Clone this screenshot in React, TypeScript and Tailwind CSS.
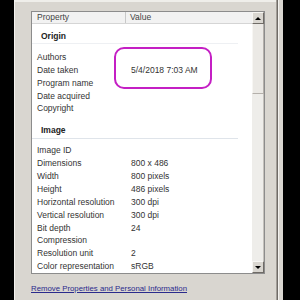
const font = { fontFamily: '"Liberation Sans", Arial, sans-serif' }

const origin: [string, string][] = [
  ['Authors', ''],
  ['Date taken', '5/4/2018 7:03 AM'],
  ['Program name', ''],
  ['Date acquired', ''],
  ['Copyright', ''],
]

const image: [string, string][] = [
  ['Image ID', ''],
  ['Dimensions', '800 x 486'],
  ['Width', '800 pixels'],
  ['Height', '486 pixels'],
  ['Horizontal resolution', '300 dpi'],
  ['Vertical resolution', '300 dpi'],
  ['Bit depth', '24'],
  ['Compression', ''],
  ['Resolution unit', '2'],
  ['Color representation', 'sRGB'],
]

function Row({ label, value }: { label: string; value: string }) {
  return (
    <div className="flex h-[13.3px] items-center text-[8.5px] text-[#333]">
      <div className="w-[99px] shrink-0 pl-[5px] whitespace-nowrap">{label}</div>
      <div className="whitespace-nowrap">{value}</div>
    </div>
  )
}

function ScrollButton({ up }: { up?: boolean }) {
  return (
    <div className="flex h-[12px] items-center justify-center border border-t-[#f7f6f3] border-l-[#f7f6f3] border-r-[#6f6b66] border-b-[#6f6b66] bg-[#d9d6d0]">
      <div
        className={
          up
            ? 'h-0 w-0 border-x-[3px] border-b-[3px] border-x-transparent border-b-black'
            : 'h-0 w-0 border-x-[3px] border-t-[3px] border-x-transparent border-t-black'
        }
      />
    </div>
  )
}

export default function App() {
  return (
    <div className="relative flex h-[300px] w-[300px] overflow-hidden bg-black" style={font}>
      <div className="w-[14px] shrink-0 bg-black" />

      {/* dialog page */}
      <div className="flex w-[262px] shrink-0 flex-col border-l border-[#f3f2ef] bg-[#d9d6d0]">
        <div className="h-[11px] shrink-0 border-t-2 border-[#efeeea]" />

        <div className="ml-[16px] flex h-[263px] w-[234px] shrink-0 overflow-hidden border border-[#8c8c8c] bg-white">
          <div className="flex min-w-0 flex-1 flex-col">
            {/* header */}
            <div className="flex h-[12px] shrink-0 items-center border-b border-[#d5d5d5] bg-[#f2f2f2] text-[8.5px] text-[#444]">
              <div className="flex h-full w-[94px] items-center border-r border-[#c8c8c8] pl-[5px]">Property</div>
              <div className="pl-[4px]">Value</div>
            </div>

            <div className="pt-[6px] pb-[7px]">
              <div className="h-[12px] pl-[9px] text-[8.5px] leading-[12px] font-bold text-[#222]">Origin</div>
              <div className="mt-px mr-[14px] h-px bg-[#eef0f3]" />
            </div>
            {origin.map(([l, v]) => (
              <Row key={l} label={l} value={v} />
            ))}

            <div className="pt-[9px] pb-[5px]">
              <div className="h-[12px] pl-[9px] text-[8.5px] leading-[12px] font-bold text-[#222]">Image</div>
              <div className="mt-[2px] mr-[14px] h-px bg-[#dfe4ea]" />
            </div>
            {image.map(([l, v]) => (
              <Row key={l} label={l} value={v} />
            ))}
          </div>

          {/* scrollbar */}
          <div className="flex w-[12px] shrink-0 flex-col bg-[#eeedea]">
            <ScrollButton up />
            <div className="flex flex-1 flex-col">
              <div className="h-[70px] border-r border-b border-[#b4b0ab] border-l border-l-[#f7f6f3] bg-[#ebe9e5]" />
              <div className="flex-1 border-r border-[#c4c1bc]" />
            </div>
            <ScrollButton />
          </div>
        </div>

        <div className="mt-[10px] pl-[16px] text-[7.8px] leading-[10px] whitespace-nowrap text-[#2a2a8c] underline">
          Remove Properties and Personal Information
        </div>
      </div>

      <div className="w-px shrink-0 bg-[#a19d97]" />
      <div className="w-px shrink-0 bg-[#6f6b66]" />
      <div className="w-px shrink-0 bg-[#f2f1ee]" />
      <div className="w-[4px] shrink-0 bg-[#d9d6d0]" />
      <div className="flex-1 bg-black" />

      {/* magenta annotation */}
      <div className="absolute top-[47px] left-[114px] h-[42px] w-[98px] rounded-[10px] border-2 border-[#c41fc4]" />
    </div>
  )
}
